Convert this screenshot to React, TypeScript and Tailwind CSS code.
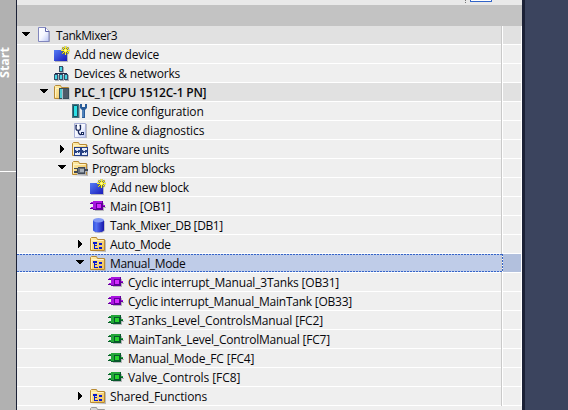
import React from "react";

type IconName = "page" | "add" | "net" | "plc" | "config" | "diag" | "units" | "program" | "ob" | "fc" | "db" | "group";

type Row = {
  label: string;
  level: number;
  icon: IconName;
  tracking: string;
  arrow?: "down" | "right";
  dark?: boolean;
  bold?: boolean;
  selected?: boolean;
};

const rows: Row[] = [
  { label: "TankMixer3", level: 0, icon: "page", tracking: "tracking-[-0.43px]", arrow: "down", dark: true },
  { label: "Add new device", level: 1, icon: "add", tracking: "tracking-[-0.17px]" },
  { label: "Devices & networks", level: 1, icon: "net", tracking: "tracking-[-0.19px]" },
  { label: "PLC_1 [CPU 1512C-1 PN]", level: 1, icon: "plc", tracking: "tracking-[-0.22px]", arrow: "down", dark: true, bold: true },
  { label: "Device configuration", level: 2, icon: "config", tracking: "tracking-[-0.16px]" },
  { label: "Online & diagnostics", level: 2, icon: "diag", tracking: "tracking-[-0.11px]" },
  { label: "Software units", level: 2, icon: "units", tracking: "tracking-[-0.26px]", arrow: "right" },
  { label: "Program blocks", level: 2, icon: "program", tracking: "tracking-[-0.31px]", arrow: "down" },
  { label: "Add new block", level: 3, icon: "add", tracking: "tracking-[-0.2px]" },
  { label: "Main [OB1]", level: 3, icon: "ob", tracking: "tracking-[-0.24px]" },
  { label: "Tank_Mixer_DB [DB1]", level: 3, icon: "db", tracking: "tracking-[-0.37px]" },
  { label: "Auto_Mode", level: 3, icon: "group", tracking: "tracking-[-0.36px]", arrow: "right" },
  { label: "Manual_Mode", level: 3, icon: "group", tracking: "tracking-[-0.34px]", arrow: "down", selected: true },
  { label: "Cyclic interrupt_Manual_3Tanks [OB31]", level: 4, icon: "ob", tracking: "tracking-[-0.19px]" },
  { label: "Cyclic interrupt_Manual_MainTank [OB33]", level: 4, icon: "ob", tracking: "tracking-[-0.24px]" },
  { label: "3Tanks_Level_ControlsManual [FC2]", level: 4, icon: "fc", tracking: "tracking-[-0.14px]" },
  { label: "MainTank_Level_ControlManual [FC7]", level: 4, icon: "fc", tracking: "tracking-[-0.21px]" },
  { label: "Manual_Mode_FC [FC4]", level: 4, icon: "fc", tracking: "tracking-[-0.18px]" },
  { label: "Valve_Controls [FC8]", level: 4, icon: "fc", tracking: "tracking-[-0.07px]" },
  { label: "Shared_Functions", level: 3, icon: "group", tracking: "tracking-[-0.12px]", arrow: "right" },
];

const indents = ["pl-[3px]", "pl-[21px]", "pl-[39px]", "pl-[57px]", "pl-[75px]"];

function Folder() {
  return (
    <>
      <path d="M1 16h15V4h-1v11z" fill="#b9b9bd" />
      <path d="M.5 14.500v-12l1-1h5l1 2h7v11z" fill="url(#folder)" stroke="#b88a35" />
      <path d="M1.500 13.500v-9h12" fill="none" stroke="#fff3c5" />
    </>
  );
}

function Block({ main, light, dark }: { main: string; light: string; dark: string }) {
  return (
    <g shapeRendering="crispEdges">
      <path d="M5 13h9v-3h2V9h-2V5h-1v7H5z" fill="#b5b5ba" />
      <path d="M0 5h4v1H0zM0 10h4v1H0zM13 8h2v1h-2z" fill={dark} />
      <path d="M1 4h3v1H1zM1 9h3v1H1zM13 7h2v1h-2z" fill={main} />
      <path d="M3 3h10v9H3z" fill={dark} />
      <path d="M3 3h9v8H3z" fill={main} />
      <path d="M6 5h6v6H6z" fill={dark} />
      <path d="M7 6h4v4H7z" fill={light} />
    </g>
  );
}

function Icon({ name }: { name: IconName }) {
  let art: React.ReactNode = null;
  switch (name) {
    case "page":
      art = (
        <>
          <path d="M3 15h11V4h-1v10z" fill="#b0b0b4" />
          <path d="M2.500.5h7l3.500 4v10H2.500z" fill="url(#paper)" stroke="#8186bd" />
          <path d="M9.500.5v4H13" fill="#fff" stroke="#5e64ab" />
        </>
      );
      break;
    case "add":
      art = (
        <>
          <path d="M1 15v1h13V6h-1v9z" fill="#b5b5bd" />
          <path d="M0 4h13v11H0z" fill="url(#blue)" />
          <path d="M11.500 0v9M7 4.500h9M8.300 1.300l6.400 6.400M14.700 1.300L8.300 7.700" stroke="#6e7430" strokeWidth="1.700" />
          <path d="M11.500 0v9M7 4.500h9M8.300 1.300l6.400 6.400M14.700 1.300L8.300 7.700" stroke="#fff21c" strokeWidth="1" />
          <path d="M10.500 3.500h2v2h-2z" fill="#ffffb0" />
        </>
      );
      break;
    case "net":
      art = (
        <g shapeRendering="crispEdges">
          <path d="M7 6h1v2h5v2h-1V9H8v1H7V9H2v1H1V8h6z" fill="#1c2748" />
          {[[5, 1], [0, 9], [5, 9], [10, 9]].map(([x, y]) => (
            <g key={`${x}-${y}`} transform={`translate(${x} ${y})`}>
              <path d="M1 1h4v6H1z" fill="#aaaeb5" />
              <path d="M0 0h4v6H0z" fill="#36506a" />
              <path d="M1 1h2v4H1z" fill="#48d6e5" />
            </g>
          ))}
        </g>
      );
      break;
    case "plc":
      art = (
        <>
          <Folder />
          <g shapeRendering="crispEdges">
            <path d="M5 4h11v12H5z" fill="#c5c9cc" />
            <path d="M5 4h10v11H5z" fill="#394d5a" />
            <path d="M6 5h2v9H6z" fill="#4ccbd3" />
            <path d="M8 5h1v10H8z" fill="#a9bcc6" />
            <path d="M9 5h5v9H9z" fill="#4e5b6a" />
          </g>
        </>
      );
      break;
    case "config":
      art = (
        <>
          <path d="M0 1h7v14H0z" fill="#477282" />
          <path d="M1.500 2.500h4v11h-4z" fill="#2ce0e6" stroke="#17525f" />
          <path d="M7.500 2v13" stroke="#aaafb5" />
          <path d="M8 1v4l2 2v8h3V7l2-2V1h-2v3h-3V1z" fill="#285b98" />
          <path d="M11 7v7" stroke="#79a7d9" />
        </>
      );
      break;
    case "diag":
      art = (
        <>
          <path d="M3 16h12V2h-1v13z" fill="#babac1" />
          <path d="M2.500 1.500h11v14h-11z" fill="url(#paper)" stroke="#a9b0d7" />
          <path d="M5 3.500H4v3c0 2.500 4.500 2.500 4.500 0v-3h-1M6.300 8.500c0 5 3.700 5 3.700 2" fill="none" stroke="#18285c" strokeWidth="1.300" />
          <path d="M9 10h3v3H9z" fill="#18285c" />
          <path d="M10 11h1v1h-1z" fill="#fff" />
        </>
      );
      break;
    case "units":
      art = (
        <>
          <Folder />
          <g shapeRendering="crispEdges">
            {[2, 9].map((x) => (
              <g key={x} transform={`translate(${x} 6)`}>
                <path d="M0 0h7v9H0z" fill="#264087" />
                <path d="M1 1h5v7H1z" fill="#e5ebfa" />
                <path d="M1 3h2v3H1zM4 3h2v3H4zM3 4h1v1H3z" fill="#29427e" />
                <path d="M2 3h1v1H2zM5 5h1v1H5z" fill="#b5c5ef" />
              </g>
            ))}
          </g>
        </>
      );
      break;
    case "program":
      art = (
        <>
          <Folder />
          <g shapeRendering="crispEdges">
            <path d="M5 15h9v-3h2v-1h-2V7H6z" fill="#afb1b6" />
            <path d="M2 8h4V7h7v2h3v2h-3v3H6v-1H2v-2h3V9H2z" fill="#414956" />
            <path d="M6 8h6v5H6z" fill="#68717e" />
            <path d="M8 9h4v3H8z" fill="#a8b0ba" />
          </g>
        </>
      );
      break;
    case "ob":
      art = <Block main="#a914df" light="#d52cff" dark="#600099" />;
      break;
    case "fc":
      art = <Block main="#23a53a" light="#28d52e" dark="#07582b" />;
      break;
    case "db":
      art = (
        <>
          <path d="M4 4h11v10l-3 2H5z" fill="#c2c2ca" />
          <path d="M3 3v10c0 3 11 3 11 0V3z" fill="url(#cylinder)" />
          <ellipse cx="8.500" cy="3.200" rx="5.500" ry="2.200" fill="#8299f5" />
        </>
      );
      break;
    case "group":
      art = (
        <>
          <Folder />
          <g shapeRendering="crispEdges" fill="#0719cf">
            <path d="M3 6h4v2H3zM4 8h1v5H4zM5 9h2v1H5zM5 12h3v1H5zM9 7h3v2H9zM9 11h3v2H9z" />
          </g>
        </>
      );
  }
  return (
    <svg className="mt-px size-4 shrink-0 overflow-visible" viewBox="0 0 16 16" fill="none">
      {art}
    </svg>
  );
}

function Gradients() {
  return (
    <svg className="absolute size-0" aria-hidden="true">
      <defs>
        <linearGradient id="folder" x1="0" y1="0" x2="1" y2="1">
          <stop stopColor="#fff0ad" />
          <stop offset="1" stopColor="#efbd54" />
        </linearGradient>
        <linearGradient id="paper" x1="0" y1="0" x2="1" y2="1">
          <stop stopColor="#fff" />
          <stop offset=".5" stopColor="#f5f7ff" />
          <stop offset="1" stopColor="#b8c3f3" />
        </linearGradient>
        <linearGradient id="blue" x1="0" y1="0" x2="1" y2="1">
          <stop stopColor="#547cf5" />
          <stop offset="1" stopColor="#1a1bba" />
        </linearGradient>
        <linearGradient id="cylinder">
          <stop stopColor="#3154db" />
          <stop offset=".3" stopColor="#5370f3" />
          <stop offset="1" stopColor="#1716aa" />
        </linearGradient>
      </defs>
    </svg>
  );
}

function TreeRow({ row }: { row: Row }) {
  const fill = row.selected ? "bg-[#bfcce8]" : row.dark ? "bg-[#e1e1e1]" : "bg-[#efefef]";
  const side = row.selected ? "bg-[#b2c0dd]" : fill;
  return (
    <div className="flex h-[19px] shrink-0 border-b border-white">
      <div className={`relative flex w-[484px] items-start ${fill} ${indents[row.level]}`}>
        <span className="flex h-[18px] w-4 shrink-0">
          {row.arrow && (
            <svg className="h-[18px] w-4" viewBox="0 0 16 18" shapeRendering="crispEdges">
              <path d={row.arrow === "down" ? "M2 6h8v1H9v1H8v1H7v1H5V9H4V8H3V7H2z" : "M4 5h1v1h1v1h1v1h1v2H7v1H6v1H5v1H4z"} />
            </svg>
          )}
        </span>
        <Icon name={row.icon} />
        <span className={`ml-1 h-[18px] text-[12px] leading-[19px] whitespace-pre text-[#08080c] ${row.tracking} ${row.bold ? "font-semibold" : ""}`}>{row.label}</span>
        {row.selected && (
          <svg className="absolute top-0 left-0 z-10 h-[18px] w-[486px]" viewBox="0 0 486 18" fill="none" stroke="#3564c8" strokeDasharray="2 1">
            <path d="M0 .5h486M0 17.500h486M485.500 0v18" />
          </svg>
        )}
      </div>
      <div className="-mb-px w-px bg-[#c9c9c9]" />
      <div className="w-px bg-white" />
      <div className={`w-[18px] ${side}`} />
    </div>
  );
}

export default function App() {
  return (
    <div className="flex h-[410px] w-[568px] overflow-hidden bg-[#3b445e] font-['Open_Sans','Noto_Sans',sans-serif]">
      <Gradients />
      <aside className="flex w-4 shrink-0 flex-col bg-[#b1b1b1]">
        <div className="flex h-[171px] justify-start pt-[46px]">
          <span className="h-8 w-[10px] rotate-180 text-[12.5px] leading-[10px] font-bold text-white [writing-mode:vertical-rl]">Start</span>
        </div>
        <div className="h-px bg-white" />
        <div className="flex-1 bg-[#b1b1b1]" />
      </aside>
      <div className="w-px shrink-0 bg-[#1b2136]" />
      <main className="flex w-[505px] shrink-0 flex-col overflow-hidden bg-white">
        <div className="flex h-[5px] shrink-0 bg-[#e9e9e9]">
          <div className="ml-[448px] h-[3px] w-px border-l border-dotted border-[#777]" />
          <div className="ml-1 h-[2px] w-[22px] rounded-b-[1px] border-x border-b border-[#3264c8] bg-white" />
        </div>
        <div className="h-[21px] shrink-0 bg-[#c3c3c3]" />
        {rows.map((row) => (
          <TreeRow key={row.label} row={row} />
        ))}
        <div className="flex h-[4px] shrink-0 bg-[#efefef] pl-[73px]">
          <svg className="h-[4px] w-4 flex-none" viewBox="0 0 16 4">
            <path d="M.5 4V2.500l1-1h5l1 2h7V4" fill="#d4d4d4" stroke="#999" />
          </svg>
        </div>
      </main>
      <div className="w-[3px] shrink-0 bg-[#1b2136]" />
    </div>
  );
}
